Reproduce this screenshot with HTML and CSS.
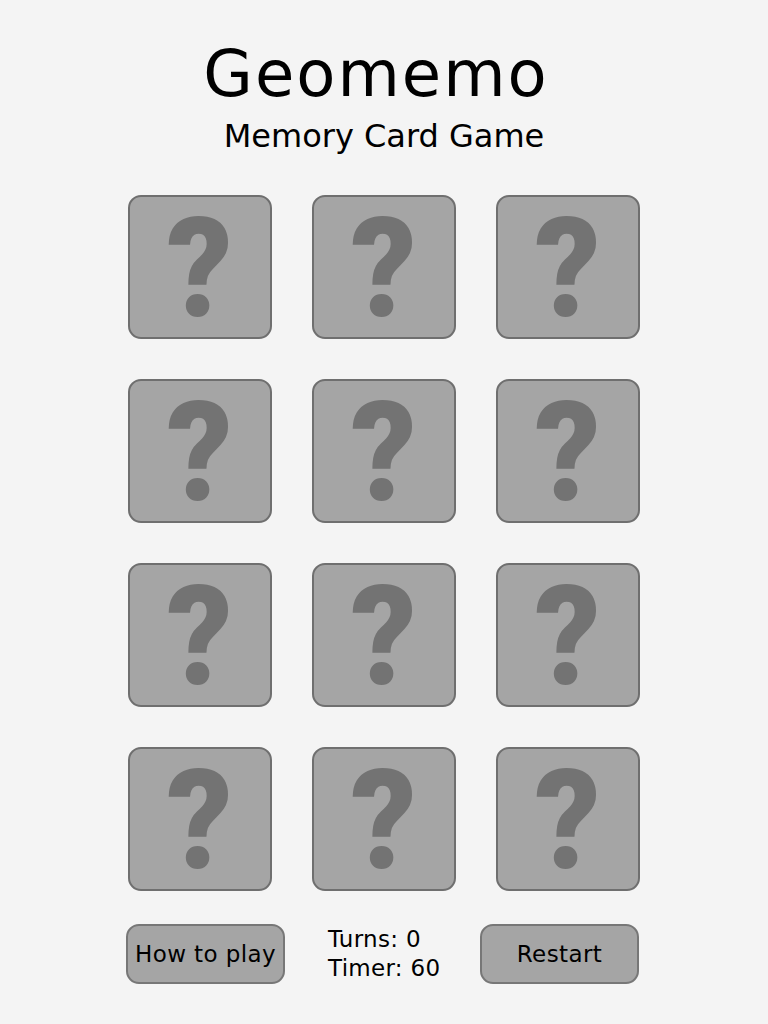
FILE: index.html
```html
<!DOCTYPE html>
<html lang="en">
<head>
<meta charset="utf-8">
<title>Geomemo</title>
<link rel="stylesheet" href="styles.css">
</head>
<body>
<main class="app">
  <header class="header">
    <h1 class="title">Geomemo</h1>
    <p class="subtitle">Memory Card Game</p>
  </header>
  <section class="board">
    <div class="card"><span class="mark">?</span></div>
    <div class="card"><span class="mark">?</span></div>
    <div class="card"><span class="mark">?</span></div>
    <div class="card"><span class="mark">?</span></div>
    <div class="card"><span class="mark">?</span></div>
    <div class="card"><span class="mark">?</span></div>
    <div class="card"><span class="mark">?</span></div>
    <div class="card"><span class="mark">?</span></div>
    <div class="card"><span class="mark">?</span></div>
    <div class="card"><span class="mark">?</span></div>
    <div class="card"><span class="mark">?</span></div>
    <div class="card"><span class="mark">?</span></div>
  </section>
  <footer class="controls">
    <button class="btn">How to play</button>
    <div class="stats">
      <div>Turns: 0</div>
      <div>Timer: 60</div>
    </div>
    <button class="btn">Restart</button>
  </footer>
</main>
</body>
</html>
```

FILE: styles.css
```css
html, body {
  margin: 0;
  padding: 0;
  background: #f4f4f4;
}

body {
  font-family: "DejaVu Sans", "Liberation Sans", sans-serif;
  color: #000;
}

.app {
  display: flex;
  flex-direction: column;
  align-items: center;
  padding-top: 42px;
}

.header {
  display: flex;
  flex-direction: column;
  align-items: center;
}

.title {
  margin: 0 16px 0 0;
  font-size: 64px;
  line-height: 64px;
  font-weight: 400;
  letter-spacing: 2px;
}

.subtitle {
  margin: 14px 0 0;
  font-size: 32px;
  line-height: 32px;
  font-weight: 400;
}

.board {
  margin-top: 43px;
  display: grid;
  grid-template-columns: repeat(3, 144px);
  grid-auto-rows: 144px;
  gap: 40px;
}

.card {
  box-sizing: border-box;
  background: #a5a5a5;
  border: 2px solid #6f6f6f;
  border-radius: 13px;
  display: flex;
  align-items: center;
  justify-content: center;
}

.mark {
  font-family: "Roboto", "DejaVu Sans", sans-serif;
  font-weight: 900;
  font-size: 140px;
  line-height: 1;
  color: #737373;
  padding-top: 2px;
  transform: scaleX(0.92);
}

.controls {
  margin-top: 33px;
  margin-right: 3px;
  width: 513px;
  display: flex;
  justify-content: space-between;
  align-items: center;
}

.btn {
  box-sizing: border-box;
  width: 159px;
  height: 60px;
  background: #a5a5a5;
  border: 2px solid #777;
  border-radius: 13px;
  font-family: "DejaVu Sans", sans-serif;
  font-size: 23px;
  color: #000;
  padding: 0;
  letter-spacing: 0.4px;
}

.stats {
  margin-left: 4px;
  font-size: 23px;
  line-height: 29px;
  width: 113px;
  letter-spacing: 0.3px;
}
```
